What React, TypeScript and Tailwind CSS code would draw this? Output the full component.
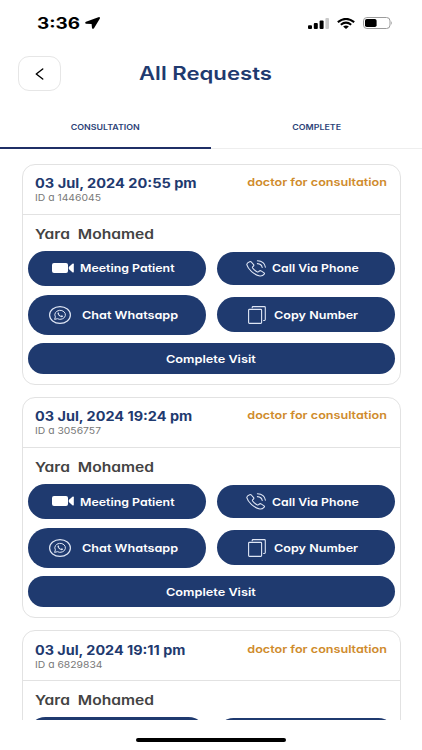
import { ReactNode } from "react"

type Request = {
    id: string
    date: string
    dateClass: string
    name: string
    type: string
}

const requests: Request[] = [
    { id: "1446045", date: "03 Jul, 2024 20:55 pm", dateClass: "scale-x-[1.12]", name: "Yara  Mohamed", type: "doctor for consultation" },
    { id: "3056757", date: "03 Jul, 2024 19:24 pm", dateClass: "scale-x-[1.11]", name: "Yara  Mohamed", type: "doctor for consultation" },
    { id: "6829834", date: "03 Jul, 2024 19:11 pm", dateClass: "scale-x-[1.105]", name: "Yara  Mohamed", type: "doctor for consultation" },
]

const LocationIcon = () => (
    <svg viewBox="0 0 15 12" className="ml-1 h-3 w-[15px]">
        <path d="M13.4 0.2 L1 4.8 Q-0.6 5.9 0.9 6.7 L6.6 6.9 L7 11 Q7.7 12.6 9 11.2 L14.9 1.4 Q15.2 -0.3 13.4 0.2 Z" />
    </svg>
)

const VideoIcon = () => (
    <svg viewBox="0 0 22 10" className="h-[10px] w-[22px]" fill="white">
        <rect x="0" y="0" width="16" height="10" rx="2" />
        <path d="M16.8 4 L20.4 0.7 Q21.8 0 21.8 1.2 V8.8 Q21.8 10 20.4 9.3 L16.8 6 Z" />
    </svg>
)

const PhoneIcon = () => (
    <svg viewBox="0 0 20 17" className="h-[17px] w-5" fill="none" stroke="#dfe6f5" strokeWidth="1.1" strokeLinecap="round" strokeLinejoin="round">
        <path d="M3.6 1.7 Q4.5 1.2 5.3 2 L7.6 4.6 Q8.2 5.5 7.3 6.2 L6.6 6.8 Q6.2 7.3 6.6 8 Q8.4 10.6 11.4 11.9 Q12.2 12.2 12.7 11.7 L13.4 11 Q14.2 10.4 15.1 10.9 L18.1 12.9 Q18.9 13.5 18.2 14.2 Q16.6 16.3 13.9 16 Q9.6 15.2 5.6 11.6 Q1.6 8 0.8 4.7 Q0.7 2.9 3.6 1.7 Z" />
        <path d="M11.4 0.7 Q18.6 1.1 19.4 7.2" />
        <path d="M11.4 3.6 Q15.6 4 16.2 7.5" />
    </svg>
)

const WhatsappIcon = () => (
    <svg viewBox="0 0 22 18" preserveAspectRatio="none" className="h-[18px] w-[22px]" fill="none" stroke="#dfe6f5">
        <ellipse cx="11" cy="9" rx="10.4" ry="8.4" strokeWidth="1.2" />
        <path d="M5.6 13.4 L6.4 10.9 A5.3 4.5 0 1 1 8.4 12.7 Z" strokeWidth="1" strokeLinejoin="round" />
        <path d="M9.3 6.3 Q8.2 6.7 8.6 8 Q9.7 10.7 12.7 11.2 Q14.1 11.1 14.2 10 L12.7 9.3 L11.9 10 Q10.5 9.3 9.7 8.1 L10.2 7.5 Z" fill="#dfe6f5" stroke="none" />
    </svg>
)

const CopyIcon = () => (
    <svg viewBox="0 0 18 18" className="size-[18px]" fill="none" stroke="#dfe6f5" strokeWidth="1.1">
        <rect x="0.6" y="3.4" width="13" height="14" rx="0.8" />
        <path d="M4.2 2.2 V1.4 Q4.2 0.6 5 0.6 H16.4 Q17.3 0.6 17.3 1.4 V13.6 Q17.3 14.5 16.4 14.5 H15.2" />
    </svg>
)

const StatusBar = () => (
    <div className="flex h-[46px] items-center pl-[37px] pr-[29px]">
        <span className="w-[44px] origin-left scale-x-[1.22] whitespace-nowrap pt-0.5 text-[15.5px] font-bold leading-none">3:36</span>
        <LocationIcon />
        <svg viewBox="0 0 21 11" className="ml-auto h-[11px] w-[21px]">
            <rect x="0" y="7.2" width="4" height="3.8" rx="1" />
            <rect x="5.8" y="5" width="4" height="6" rx="1" />
            <rect x="11.6" y="2.6" width="4" height="8.4" rx="1" />
            <rect x="17.4" y="0" width="3.6" height="11" rx="1" fill="#c9c9c9" />
        </svg>
        <svg viewBox="0 0 18 11" className="ml-2 h-[11px] w-[18px]" fill="none" stroke="black" strokeWidth="2">
            <path d="M0.8 4.1 Q9 -2.4 17.2 4.1" />
            <path d="M3.8 6.7 Q9 2.6 14.2 6.7" />
            <path d="M6.1 8.6 Q9 6.6 11.9 8.6 L9 11 Z" fill="black" stroke="none" />
        </svg>
        <svg viewBox="0 0 30 12" className="ml-2 h-3 w-[30px]">
            <rect x="0.5" y="0.5" width="26.5" height="11" rx="3.4" fill="none" stroke="#9b9b9b" />
            <rect x="2" y="2" width="11.6" height="8" rx="1.8" />
            <path d="M28.3 4 Q29.8 6 28.3 8 Z" fill="#8a8a8a" />
        </svg>
    </div>
)

const Button = ({ className, textClass, icon, children }: { className: string; textClass: string; icon?: ReactNode; children: ReactNode }) => (
    <button className={`flex items-center rounded-full bg-[#1f3a6f] text-[11px] font-semibold text-white ${className}`}>
        {icon}
        <span className={`origin-left whitespace-nowrap pt-px ${textClass}`}>{children}</span>
    </button>
)

const RequestCard = ({ request }: { request: Request }) => (
    <article className="h-[221.3px] shrink-0 rounded-[13px] border border-[#e2e2e2]">
        <div className="flex h-[50px] justify-between border-b border-[#e2e2e2] pl-3 pr-[13px]">
            <div className="pt-[10.4px]">
                <h2 className={`origin-left whitespace-nowrap text-[13px] font-bold leading-4 text-[#1f3a6f] ${request.dateClass}`}>{request.date}</h2>
                <p className="origin-left scale-x-[1.09] whitespace-nowrap text-[9.5px] leading-[14px] text-[#777777]">ID a {request.id}</p>
            </div>
            <span className="origin-right scale-x-[1.145] whitespace-nowrap pt-[10.2px] text-[11px] font-semibold leading-[14px] text-[#cf8b2c]">{request.type}</span>
        </div>
        <p className="h-9 whitespace-pre pl-3 text-[13px] font-semibold leading-[38px] text-[#434343]">
            <span className="inline-block origin-left scale-x-[1.2]">{request.name}</span>
        </p>
        <div className="grid grid-cols-[178px_178px] items-center gap-x-[11px] pl-[5px]">
            <Button className="h-[35px] gap-[6px] pl-6" textClass="scale-x-[1.125]" icon={<VideoIcon />}>Meeting Patient</Button>
            <Button className="h-[33px] gap-[6px] pl-[29px]" textClass="scale-x-[1.115]" icon={<PhoneIcon />}>Call Via Phone</Button>
            <Button className="mt-[9px] h-10 gap-[11px] pl-[21px]" textClass="scale-x-[1.15]" icon={<WhatsappIcon />}>Chat Whatsapp</Button>
            <Button className="mt-[9px] h-[35px] gap-2 pl-[31px]" textClass="scale-x-[1.145]" icon={<CopyIcon />}>Copy Number</Button>
            <Button className="col-span-2 mt-[8.5px] h-[31px] pl-[138px]" textClass="scale-x-[1.155]">Complete Visit</Button>
        </div>
    </article>
)

export default function App() {
    return (
        <div className="flex h-[750px] w-[422px] flex-col overflow-hidden bg-white font-['Inter',sans-serif] text-black [font-feature-settings:'cv11'_1]">
            <StatusBar />
            <header className="flex h-[56px] items-center pb-px pl-[18px]">
                <button className="flex h-[35px] w-[43px] items-center justify-center rounded-[11px] border border-[#e6e6e6]">
                    <svg viewBox="0 0 9 13" className="h-[12px] w-[9px]" fill="none" stroke="black" strokeWidth="1.5" strokeLinecap="round" strokeLinejoin="round">
                        <path d="M8 1 L1 6.5 L8 12" />
                    </svg>
                </button>
                <h1 className="ml-[78px] origin-left scale-x-[1.23] whitespace-nowrap text-[18px] font-semibold text-[#1f3a6f]">All Requests</h1>
            </header>
            <nav className="grid h-[47px] shrink-0 grid-cols-2 text-[7.5px] font-semibold leading-none text-[#2c4278]">
                <button className="border-b-2 border-[#1f2f66] pt-[7px]"><span className="inline-block scale-x-[1.18]">CONSULTATION</span></button>
                <button className="border-b border-[#eeeeee] pt-[6px]"><span className="inline-block scale-x-[1.18]">COMPLETE</span></button>
            </nav>
            <main className="mx-[21.5px] flex h-[570.5px] shrink-0 flex-col gap-[12.2px] overflow-hidden pt-[14.5px]">
                {requests.map((request) => (
                    <RequestCard key={request.id} request={request} />
                ))}
            </main>
            <div className="mx-auto mt-[18.5px] h-1 w-[150px] rounded-full bg-black" />
        </div>
    )
}
